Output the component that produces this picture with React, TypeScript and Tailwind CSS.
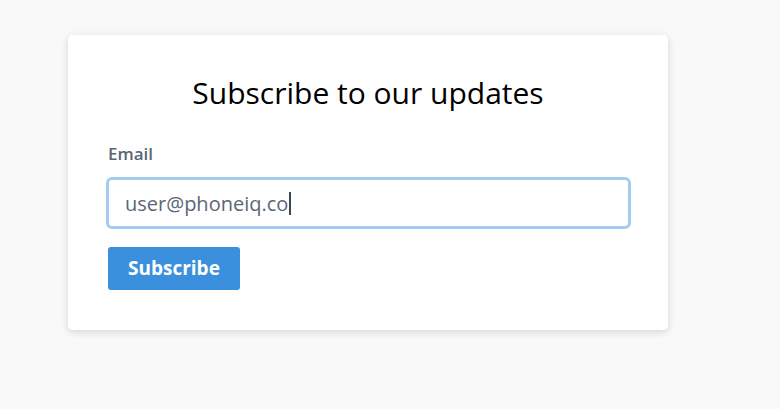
export default function App() {
  const email = "user@phoneiq.co";

  return (
    <div className="min-h-[409px] bg-[#f9f9f9] pt-[35px] pl-[68px] font-['Open_Sans',sans-serif]">
      <div className="w-[600px] rounded-[5px] bg-white px-10 pt-[38px] pb-10 shadow-[0_2px_8px_rgba(0,0,0,0.15)]">
        <h1 className="text-center text-[30px] leading-[40px] text-black">
          Subscribe to our updates
        </h1>

        <form className="mt-[30px]" onSubmit={(e) => e.preventDefault()}>
          <label className="block text-[17px] font-semibold leading-[22px] text-[#596573]">
            Email
          </label>

          {/* input with a drawn caret (focused state) */}
          <div className="relative -mx-[2px] mt-[12px] w-[525px]">
            <input
              type="text"
              defaultValue={email}
              className="block h-[52px] w-full rounded-[6px] border-[3px] border-[#a5cbee] px-[16px] text-[20px] text-[#5a6776] outline-none"
            />
            <span className="pointer-events-none absolute top-[14px] left-[19px] flex h-[24px] items-center text-[20px] whitespace-pre">
              <span className="invisible">{email}</span>
              <span className="ml-[1px] h-[23px] w-[1.5px] bg-[#3c4653]" />
            </span>
          </div>

          <button
            type="submit"
            className="mt-[18px] h-[43px] rounded-[3px] bg-[#3a90dd] px-[20px] text-[19px] font-bold text-white"
          >
            Subscribe
          </button>
        </form>
      </div>
    </div>
  );
}
